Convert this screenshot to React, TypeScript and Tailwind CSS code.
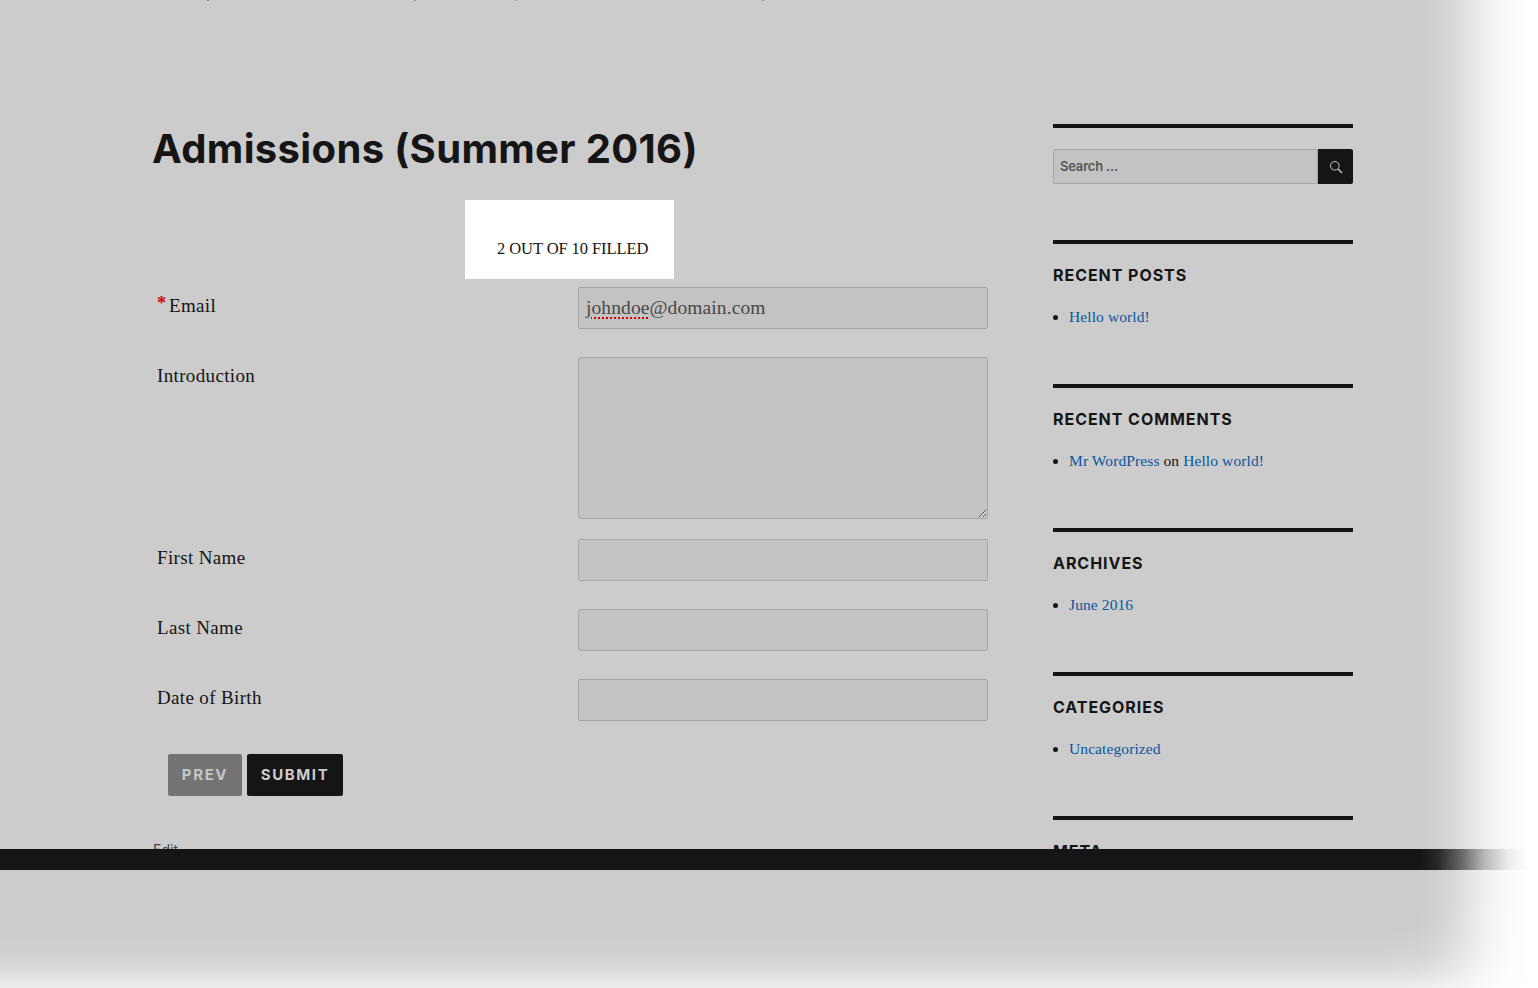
import React from "react";

const heading = "font-['Inter','Liberation_Sans',sans-serif]";
const serif = "font-['Liberation_Serif',serif]";

interface FieldRowProps {
  label: string;
  required?: boolean;
  gap: string;
  children?: React.ReactNode;
}

const inputClass =
  "block w-[410px] h-[42px] bg-[#c3c3c3] border border-[#a6a6a6] rounded-[2px] outline-none";

const FieldRow: React.FC<FieldRowProps> = ({ label, required, gap, children }) => (
  <div className={`flex items-start ${gap}`}>
    <label
      className={`w-[426px] pl-[5px] pt-[6px] text-[19px] leading-[26px] tracking-[0.35px] text-[#151515] ${serif}`}
    >
      {required && (
        <span className="absolute -mt-[3px] text-[18px] font-bold text-[#d40000]">*</span>
      )}
      {required && <span className="inline-block w-[12px]" />}
      {label}
    </label>
    {children || <input className={inputClass} />}
  </div>
);

interface WidgetProps {
  title: string;
  children: React.ReactNode;
}

const Widget: React.FC<WidgetProps> = ({ title, children }) => (
  <section className="h-[144px] border-t-4 border-[#151515] pt-[19px]">
    <h2
      className={`text-[16px] leading-[24px] font-bold tracking-[0.95px] uppercase text-[#151515] ${heading}`}
    >
      {title}
    </h2>
    <ul className={`mt-[18px] text-[15.5px] leading-[24px] tracking-[0.1px] text-[#151515] ${serif}`}>
      <li className="flex items-center">
        <span className="w-[5px] h-[5px] rounded-full bg-[#151515] mr-[11px]" />
        <span>{children}</span>
      </li>
    </ul>
  </section>
);

const Link: React.FC<{ children: React.ReactNode }> = ({ children }) => (
  <a className="text-[#0a55a0]">{children}</a>
);

export default function App() {
  return (
    <div className="relative w-full h-[988px] overflow-hidden bg-[#cccccc] flex flex-col">
      {/* descenders of the line cut off by the top of the window */}
      <div className="absolute top-0 left-[207px] w-[2px] h-[1px] bg-[#9a9a9a]" />
      <div className="absolute top-0 left-[414px] w-[2px] h-[1px] bg-[#9a9a9a]" />
      <div className="absolute top-0 left-[515px] w-[2px] h-[1px] bg-[#9a9a9a]" />
      <div className="absolute top-0 left-[762px] w-[2px] h-[1px] bg-[#9a9a9a]" />

      <div className="h-[849px] overflow-hidden flex pl-[152px]">
        <main className="w-[901px] shrink-0 pt-[124px]">
          <h1
            className={`text-[40px] leading-[50px] font-bold tracking-[0.34px] text-[#151515] ${heading}`}
          >
            Admissions (Summer 2016)
          </h1>
          <div
            className={`ml-[313px] mt-[26px] w-[209px] h-[79px] bg-white pl-[32px] pt-[37px] text-[16.5px] leading-[24px] tracking-[-0.08px] text-[#151515] ${serif}`}
          >
            2 OUT OF 10 FILLED
          </div>

          <div className="w-[836px]">
            <FieldRow label="Email" required gap="mt-[8px]">
              <div
                className={`${inputClass} px-[7px] flex items-center text-[19.5px] tracking-[0.1px] text-[#484848] ${serif}`}
              >
                <span className="underline decoration-dotted decoration-[#d40000] decoration-2 underline-offset-[3px]">
                  johndoe
                </span>
                @domain.com
              </div>
            </FieldRow>
            <FieldRow label="Introduction" gap="mt-[28px]">
              <textarea className={`${inputClass} h-[162px] resize-y`} />
            </FieldRow>
            <FieldRow label="First Name" gap="mt-[20px]" />
            <FieldRow label="Last Name" gap="mt-[28px]" />
            <FieldRow label="Date of Birth" gap="mt-[28px]" />

            <div className={`flex gap-[5px] mt-[33px] ml-[16px] ${heading}`}>
              <button className="w-[74px] h-[42px] rounded-[2px] bg-[#737373] text-[#c6c6c6] text-[15px] font-bold tracking-[1.6px]">
                PREV
              </button>
              <button className="w-[96px] h-[42px] rounded-[2px] bg-[#151515] text-[#cccccc] text-[15px] font-bold tracking-[1.6px]">
                SUBMIT
              </button>
            </div>

            <div className={`mt-[44px] ml-[1px] text-[14px] leading-[20px] text-[#444444] ${heading}`}>
              Edit
            </div>
          </div>
        </main>

        <aside className="w-[300px] shrink-0 pt-[124px]">
          <section className="h-[116px] border-t-4 border-[#151515] pt-[21px]">
            <form className="flex h-[35px]">
              <div
                className={`flex-1 flex items-center px-[6px] bg-[#c3c3c3] border border-[#a6a6a6] rounded-l-[2px] text-[13px] font-semibold tracking-[-0.2px] text-[#555555] ${heading}`}
              >
                Search ...
              </div>
              <button className="w-[35px] flex items-center justify-center bg-[#151515] rounded-r-[2px]">
                <svg width="14" height="14" viewBox="0 0 14 14" fill="none" stroke="#cccccc">
                  <circle cx="5.8" cy="5.8" r="4.3" strokeWidth="1" />
                  <path d="M9 9l4 4" strokeWidth="1.5" />
                </svg>
              </button>
            </form>
          </section>
          <Widget title="Recent Posts">
            <Link>Hello world!</Link>
          </Widget>
          <Widget title="Recent Comments">
            <Link>Mr WordPress</Link> on <Link>Hello world!</Link>
          </Widget>
          <Widget title="Archives">
            <Link>June 2016</Link>
          </Widget>
          <Widget title="Categories">
            <Link>Uncategorized</Link>
          </Widget>
          <section className="border-t-4 border-[#151515] pt-[19px]">
            <h2
              className={`text-[16px] leading-[24px] font-bold tracking-[0.95px] uppercase text-[#151515] ${heading}`}
            >
              Meta
            </h2>
          </section>
        </aside>
      </div>

      <div className="h-[21px] shrink-0 bg-[#151515]" />
      <div className="flex-1" />

      {/* soft fade of the overlay into the white edge of the window */}
      <div className="absolute inset-y-0 right-0 w-[118px] pointer-events-none bg-[linear-gradient(to_right,rgba(255,255,255,0)_0%,rgba(255,255,255,0.08)_15%,rgba(255,255,255,0.35)_35%,rgba(255,255,255,0.7)_55%,rgba(255,255,255,0.92)_75%,#ffffff_92%)]" />
      <div className="absolute inset-x-0 bottom-0 h-[58px] pointer-events-none bg-[linear-gradient(to_bottom,rgba(255,255,255,0)_0%,rgba(255,255,255,0.08)_40%,rgba(255,255,255,0.3)_70%,rgba(255,255,255,0.65)_100%)]" />
      <div className="absolute right-0 bottom-0 w-[170px] h-[100px] pointer-events-none bg-[radial-gradient(ellipse_at_100%_100%,rgba(255,255,255,0.35)_0%,rgba(255,255,255,0)_72%)]" />
    </div>
  );
}
